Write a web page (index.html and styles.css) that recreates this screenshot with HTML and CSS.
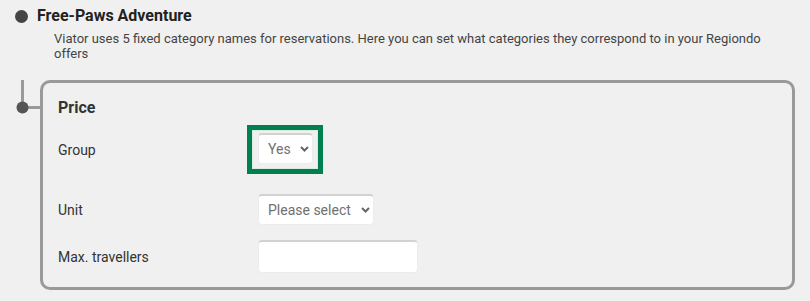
FILE: index.html
```html
<!DOCTYPE html>
<html lang="en">
<head>
    <meta charset="UTF-8">
    <meta name="viewport" content="width=device-width, initial-scale=1.0">
    <title>Viator categories</title>
    <link rel="stylesheet" href="styles.css">
</head>
<body>
    <div class="product">
        <div class="product-head">
            <span class="bullet"></span>
            <h2>Free-Paws Adventure</h2>
        </div>
        <p class="product-desc">Viator uses 5 fixed category names for reservations. Here you can set what categories they correspond to in your Regiondo offers</p>

        <div class="category">
            <svg class="connector" width="24" height="40" viewBox="0 0 24 40">
                <rect x="5" y="0" width="3" height="27" fill="#999"/>
                <rect x="6" y="26" width="18" height="3" fill="#999"/>
                <circle cx="6.5" cy="27.5" r="6" fill="#555"/>
            </svg>
            <div class="category-box">
                <h3>Price</h3>
                <div class="field field-group">
                    <label for="group">Group</label>
                    <div class="highlight">
                        <span class="select-wrap">
                            <select id="group" class="select-yes">
                                <option>Yes</option>
                                <option>No</option>
                            </select>
                            <svg class="chevron" width="9" height="6" viewBox="0 0 9 6"><path d="M1 1l3.5 3.5L8 1" fill="none" stroke="#666" stroke-width="2"/></svg>
                        </span>
                    </div>
                </div>
                <div class="field field-unit">
                    <label for="unit">Unit</label>
                    <span class="select-wrap">
                        <select id="unit" class="select-unit">
                            <option>Please select</option>
                        </select>
                        <svg class="chevron" width="9" height="6" viewBox="0 0 9 6"><path d="M1 1l3.5 3.5L8 1" fill="none" stroke="#666" stroke-width="2"/></svg>
                    </span>
                </div>
                <div class="field field-max">
                    <label for="max">Max. travellers</label>
                    <input type="text" id="max">
                </div>
            </div>
        </div>
    </div>
</body>
</html>
```

FILE: styles.css
```css
body {
    font-family: Roboto, 'Liberation Sans', sans-serif;
    background-color: #f0f0f0;
    color: #333;
    margin: 0;
    padding: 6px 15px 0 15px;
}
.product-head {
    display: flex;
    align-items: center;
    height: 20px;
}
.bullet {
    width: 13px;
    height: 13px;
    border-radius: 50%;
    background-color: #444;
    margin-right: 9px;
}
h2 {
    margin: 0;
    font-size: 16px;
    font-weight: 700;
    line-height: 20px;
    color: #222;
}
.product-desc {
    margin: 5px 0 0 39px;
    font-size: 13px;
    line-height: 15px;
    color: #444;
    max-width: 730px;
}
.category {
    display: flex;
    margin-top: 19px;
}
.connector {
    flex-shrink: 0;
    margin-left: 1px;
}
.category-box {
    flex: 1;
    height: 189px;
    border: 3px solid #999;
    border-radius: 10px;
    padding: 15px 15px 0 15px;
    box-sizing: content-box;
}
h3 {
    margin: 0;
    font-size: 16px;
    font-weight: 700;
    line-height: 20px;
    color: #333;
}
.field {
    display: flex;
    align-items: center;
}
.field label {
    width: 200px;
    font-size: 14px;
    color: #333;
}
.field-group {
    margin-top: 7px;
}
.field-unit {
    margin-top: 20px;
}
.field-max {
    margin-top: 15px;
}
/* green marker round the edited field */
.highlight {
    margin-left: -11px;
    border: 5px solid #00804f;
    padding: 3px 5px 5px 6px;
    box-shadow: inset 0 0 0 1px #d8ebe2;
}
.select-wrap {
    position: relative;
    display: inline-block;
}
select, input {
    appearance: none;
    -webkit-appearance: none;
    font-family: Roboto, 'Liberation Sans', sans-serif;
    font-size: 14px;
    color: #707070;
    background-color: #fff;
    border: 1px solid #ececec;
    border-top: 2px solid #d2d2d2;
    border-radius: 4px;
    box-sizing: border-box;
    outline: none;
    margin: 0;
}
select {
    height: 31px;
    padding: 0 20px 0 9px;
}
.select-yes {
    width: 55px;
}
.select-unit {
    width: 116px;
}
.chevron {
    position: absolute;
    right: 4px;
    top: 13px;
    pointer-events: none;
}
input {
    width: 160px;
    height: 33px;
    padding: 0 9px;
}
```
